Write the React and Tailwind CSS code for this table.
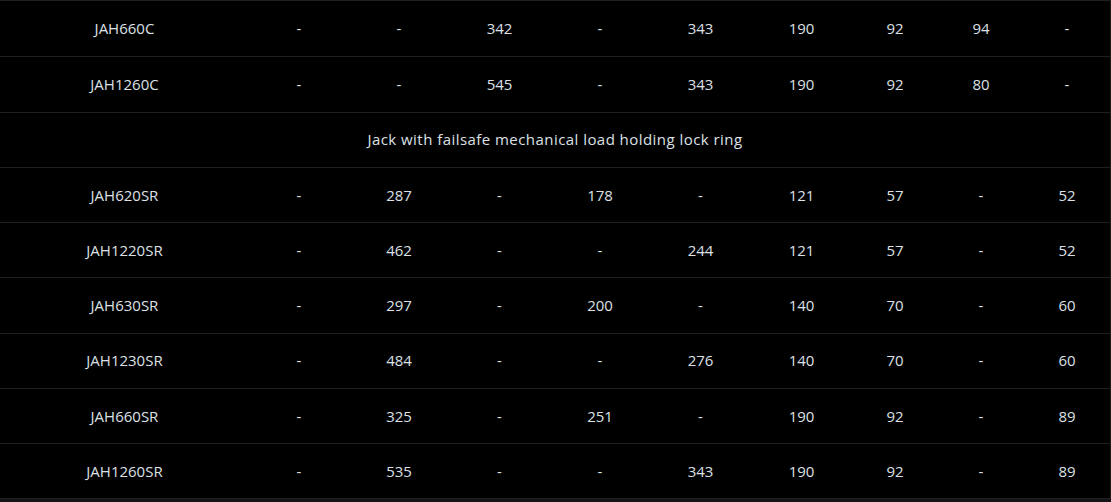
import React from 'react';

const rows = [
    ['JAH660C', '-', '-', '342', '-', '343', '190', '92', '94', '-'],
    ['JAH1260C', '-', '-', '545', '-', '343', '190', '92', '80', '-'],
    'Jack with failsafe mechanical load holding lock ring',
    ['JAH620SR', '-', '287', '-', '178', '-', '121', '57', '-', '52'],
    ['JAH1220SR', '-', '462', '-', '-', '244', '121', '57', '-', '52'],
    ['JAH630SR', '-', '297', '-', '200', '-', '140', '70', '-', '60'],
    ['JAH1230SR', '-', '484', '-', '-', '276', '140', '70', '-', '60'],
    ['JAH660SR', '-', '325', '-', '251', '-', '190', '92', '-', '89'],
    ['JAH1260SR', '-', '535', '-', '-', '343', '190', '92', '-', '89'],
];

const widths = ['w-[249px]', 'w-[100px]', 'w-[100px]', 'w-[101px]', 'w-[100px]', 'w-[101px]', 'w-[101px]', 'w-[86px]', 'w-[86px]', 'w-[86px]'];

const App = () => {
    return (
        <div className="w-[1111px] h-[502px] bg-[#151515] overflow-hidden" style={{ fontFamily: '"Open Sans", Lato, sans-serif' }}>
            <div className="bg-black border-t border-r border-b border-[#1f1f1f] text-[15px] text-[#dde0e6]">
                {rows.map((row, i) => (
                    <div key={i} className={`h-[55.25px] flex items-center ${i > 0 ? 'border-t border-[#1f1f1f]' : ''}`}>
                        {typeof row === 'string' ? (
                            <div className="flex-1 text-center tracking-[0.45px]">{row}</div>
                        ) : (
                            row.map((cell, j) => (
                                <div key={j} className={`${widths[j]} shrink-0 text-center`}>{cell}</div>
                            ))
                        )}
                    </div>
                ))}
            </div>
        </div>
    );
};

export default App;
